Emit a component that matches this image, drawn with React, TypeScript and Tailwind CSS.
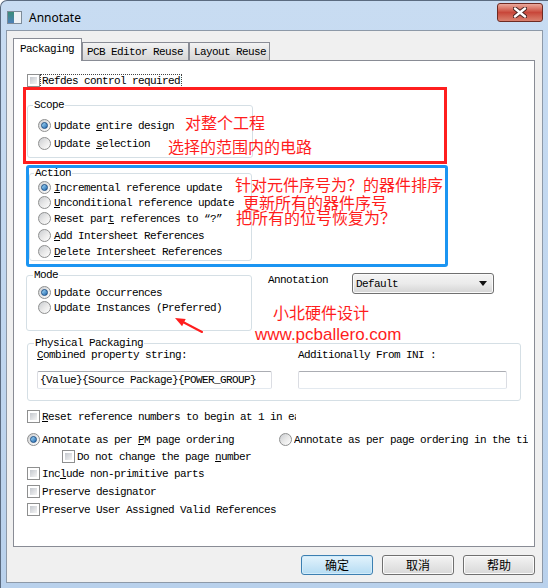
import React from 'react'

const txt = "font-['Liberation_Mono',monospace] text-[11px] tracking-[-0.6px] text-black whitespace-nowrap"
const note = "absolute font-['Noto_Sans_CJK_SC',sans-serif] text-[16px] leading-[16px] text-[#ff1d1d] whitespace-nowrap"
const group = 'border border-[#d5dfe5] rounded-[3px]'

function Check() {
  return (
    <span className="w-[13px] h-[13px] shrink-0 border border-[#8e8f8f] bg-white p-[2px]">
      <span className="block w-full h-full bg-gradient-to-br from-[#c4c8ce] to-[#f5f5f5]" />
    </span>
  )
}

function Radio({ on = false }: { on?: boolean }) {
  return (
    <span className="w-[13px] h-[13px] shrink-0 rounded-full border border-[#8e8f8f] bg-gradient-to-br from-[#c9ccd0] via-[#e8e8e8] to-white flex items-center justify-center">
      {on && <span className="w-[7px] h-[7px] rounded-full border border-[#1c4f86] bg-gradient-to-br from-[#a4dcfa] to-[#1f68ad]" />}
    </span>
  )
}

function Opt({ kind, on, children, className = '' }: { kind: 'check' | 'radio'; on?: boolean; children: React.ReactNode; className?: string }) {
  return (
    <div className={`flex items-center h-[13px] ${className}`}>
      {kind === 'check' ? <Check /> : <Radio on={on} />}
      <span className={`${txt} leading-[12px] ${kind === 'check' ? 'ml-[2px]' : 'ml-[3px]'}`}>{children}</span>
    </div>
  )
}

function Btn({ children, primary = false }: { children: React.ReactNode; primary?: boolean }) {
  return (
    <div
      className={`w-[72px] h-[20px] rounded-[3px] border flex items-center justify-center font-['Noto_Sans_CJK_SC',sans-serif] text-[12px] leading-[14px] text-black ${
        primary
          ? 'border-[#3c7fb1] bg-gradient-to-b from-[#e3f3fc] to-[#b5dcf3] shadow-[inset_0_0_0_1px_#d2ecfa]'
          : 'border-[#707070] bg-gradient-to-b from-[#f4f4f4] to-[#d8d8d8] shadow-[inset_0_0_0_1px_#fbfbfb]'
      }`}
    >
      {children}
    </div>
  )
}

export default function App() {
  return (
    <div className="w-[548px] h-[588px] overflow-hidden flex flex-col bg-gradient-to-b from-[#c8dcf2] to-[#b9d1ec] border-t border-l border-[#5b6b80] rounded-tl-[7px]">
      {/* title bar */}
      <div className="h-[29px] shrink-0 flex items-start">
        <div className="ml-[6px] mt-[10px] w-[15px] h-[13px] border border-[#7d8b99] bg-[#eef2f6] flex">
          <span className="w-[6px] h-full bg-gradient-to-b from-[#3b8c78] to-[#4d7fb8]" />
        </div>
        <span className="ml-[7px] mt-[9px] font-['Noto_Sans',sans-serif] text-[12px] leading-[16px] text-black">Annotate</span>
        <div className="ml-auto mr-[5px] mt-[2px] w-[46px] h-[19px] rounded-[3px] border border-[#6e2a22] bg-gradient-to-b from-[#eaa99c] via-[#c8473a] to-[#d9806e] flex items-center justify-center">
          <svg width="14" height="11" viewBox="0 0 14 11">
            <path d="M2 1.5 L12 9.5 M12 1.5 L2 9.5" stroke="#4a2622" strokeWidth="4.4" strokeLinecap="round" />
            <path d="M2 1.5 L12 9.5 M12 1.5 L2 9.5" stroke="#ffffff" strokeWidth="2.4" strokeLinecap="round" />
          </svg>
        </div>
      </div>

      {/* client area */}
      <div className="ml-[5px] w-[537px] h-[553px] border border-[#8d99a8] bg-[#f0f0f0] flex flex-col">
        {/* tabs */}
        <div className="mt-[7px] ml-[6px] h-[23px] -mb-[1px] flex items-end relative z-10">
          <div className={`w-[69px] h-[23px] border-l border-t border-r border-[#898c95] bg-white pl-[6px] pt-[4px] ${txt} leading-[12px]`}>Packaging</div>
          <div className={`w-[107px] h-[18px] mb-[1px] border-l border-t border-r border-[#898c95] bg-gradient-to-b from-[#f3f3f3] to-[#d6d6d6] pl-[4px] pt-[3px] ${txt} leading-[12px]`}>PCB Editor Reuse</div>
          <div className={`w-[81px] h-[18px] mb-[1px] border-l border-t border-r border-[#898c95] bg-gradient-to-b from-[#f3f3f3] to-[#d6d6d6] pl-[4px] pt-[3px] ${txt} leading-[12px]`}>Layout Reuse</div>
        </div>

        {/* tab panel */}
        <div className="ml-[6px] w-[522px] h-[487px] border border-[#898c95] bg-white relative flex flex-col">
          <div className="mt-[13px] ml-[13px] flex items-center h-[13px]">
            <Check />
            <span className={`${txt} leading-[12px] border border-dotted border-[#444] px-[1px]`}>Refdes control required</span>
          </div>

          {/* scope, marked red */}
          <div className="ml-[9px] w-[424px] h-[77px] border-[3px] border-[#ff1f1f]">
            <fieldset className={`ml-[1px] mt-[9px] w-[226px] h-[59px] ${group}`}>
              <legend className={`${txt} leading-[12px] ml-[5px] px-[1px]`}>Scope</legend>
              <Opt kind="radio" on className="ml-[10px] mt-[8px]">Update <u>e</u>ntire design</Opt>
              <Opt kind="radio" className="ml-[10px] mt-[5px]">Update <u>s</u>election</Opt>
            </fieldset>
          </div>

          {/* action, marked blue */}
          <div className="mt-[1px] ml-[12px] w-[422px] h-[102px] border-[3px] border-[#1b95f2] rounded-[3px]">
            <fieldset className={`w-[223px] h-[93px] ${group}`}>
              <legend className={`${txt} leading-[10px] ml-[4px] px-[1px]`}>Action</legend>
              <Opt kind="radio" on className="ml-[8px] mt-[3px]"><u>I</u>ncremental reference update</Opt>
              <Opt kind="radio" className="ml-[8px] mt-[2px]"><u>U</u>nconditional reference update</Opt>
              <Opt kind="radio" className="ml-[8px] mt-[3px]">Reset par<u>t</u> references to “?”</Opt>
              <Opt kind="radio" className="ml-[8px] mt-[4px]"><u>A</u>dd Intersheet References</Opt>
              <Opt kind="radio" className="ml-[8px] mt-[3px]"><u>D</u>elete Intersheet References</Opt>
            </fieldset>
          </div>

          {/* mode + annotation */}
          <div className="mt-[2px] ml-[12px] flex items-start">
            <fieldset className={`w-[226px] h-[62px] ${group}`}>
              <legend className={`${txt} leading-[12px] ml-[6px] px-[1px]`}>Mode</legend>
              <Opt kind="radio" on className="ml-[11px] mt-[5px]">Update Occurrences</Opt>
              <Opt kind="radio" className="ml-[11px] mt-[2px]">Update Instances (Preferred)</Opt>
            </fieldset>
            <span className={`${txt} leading-[12px] ml-[16px] mt-[5px]`}>Annotation</span>
            <div className="ml-[24px] mt-[4px] w-[142px] h-[21px] rounded-[3px] border border-[#707070] bg-gradient-to-b from-[#f4f4f4] via-[#ebebeb] to-[#d4d4d4] shadow-[inset_0_0_0_1px_#fafafa] flex items-center pl-[3px] pr-[6px]">
              <span className={`${txt} leading-[12px]`}>Default</span>
              <svg className="ml-auto" width="8" height="5" viewBox="0 0 8 5">
                <path d="M0 0 H8 L4 5 Z" fill="#111" />
              </svg>
            </div>
          </div>

          {/* physical packaging */}
          <fieldset className={`mt-[6px] ml-[13px] w-[494px] h-[64px] ${group}`}>
            <legend className={`${txt} leading-[12px] ml-[6px] px-[1px]`}>Physical Packaging</legend>
            <div className="ml-[9px] flex gap-[26px]">
              <div className="w-[235px]">
                <div className={`${txt} leading-[12px]`}><u>C</u>ombined property string:</div>
                <div className={`mt-[10px] h-[18px] border border-[#abadb3] border-l-[#dbdde3] border-r-[#dbdde3] border-b-[#e3e9ef] rounded-[2px] pl-[2px] flex items-center ${txt} leading-[12px]`}>
                  {'{Value}{Source Package}{POWER_GROUP}'}
                </div>
              </div>
              <div className="w-[209px]">
                <div className={`${txt} leading-[12px]`}>Additionally From INI :</div>
                <div className="mt-[10px] h-[18px] border border-[#abadb3] border-l-[#dbdde3] border-r-[#dbdde3] border-b-[#e3e9ef] rounded-[2px] bg-white" />
              </div>
            </div>
          </fieldset>

          <div className="mt-[9px] ml-[13px] flex items-center h-[13px]">
            <Check />
            <span className={`${txt} leading-[12px] ml-[2px] w-[254px] overflow-hidden`}><u>R</u>eset reference numbers to begin at 1 in each</span>
          </div>

          <div className="mt-[10px] ml-[13px] flex items-center h-[13px]">
            <div className="w-[252px] flex items-center">
              <Radio on />
              <span className={`${txt} leading-[12px] ml-[2px]`}>Annotate as per <u>P</u>M page ordering</span>
            </div>
            <Radio />
            <span className={`${txt} leading-[12px] ml-[2px] w-[234px] overflow-hidden`}>Annotate as per page ordering in the title block</span>
          </div>

          <Opt kind="check" className="mt-[4px] ml-[48px]">Do not change the page <u>n</u>umber</Opt>
          <Opt kind="check" className="mt-[4px] ml-[13px]">Inc<u>l</u>ude non-primitive parts</Opt>
          <Opt kind="check" className="mt-[5px] ml-[13px]">Preserve designator</Opt>
          <Opt kind="check" className="mt-[5px] ml-[13px]">Preserve User Assigned Valid References</Opt>

          {/* hand-written notes laid over the dialog */}
          <span className={`${note} left-[171px] top-[53px]`}>对整个工程</span>
          <span className={`${note} left-[154px] top-[77px]`}>选择的范围内的电路</span>
          <span className={`${note} left-[221px] top-[115px]`}>针对元件序号为？的器件排序</span>
          <span className={`${note} left-[229px] top-[133px]`}>更新所有的器件序号</span>
          <span className={`${note} left-[222px] top-[148px]`}>把所有的位号恢复为？</span>
          <span className={`${note} left-[259px] top-[243px]`}>小北硬件设计</span>
          <span className="absolute left-[241px] top-[264px] font-['Liberation_Sans',sans-serif] text-[17px] leading-[20px] text-[#ff1d1d] whitespace-nowrap">www.pcballero.com</span>
          <svg className="absolute left-[156px] top-[253px]" width="35" height="21" viewBox="0 0 35 21">
            <path d="M32 18 L12 7.5" stroke="#ff1d1d" strokeWidth="2" strokeLinecap="round" />
            <path d="M5 4 L15.7 5 L12.1 12.2 Z" fill="#ff1d1d" />
          </svg>
        </div>

        {/* buttons */}
        <div className="mt-[8px] pr-[7px] flex justify-end gap-[9px]">
          <Btn primary>确定</Btn>
          <Btn>取消</Btn>
          <Btn>帮助</Btn>
        </div>
      </div>
    </div>
  )
}
